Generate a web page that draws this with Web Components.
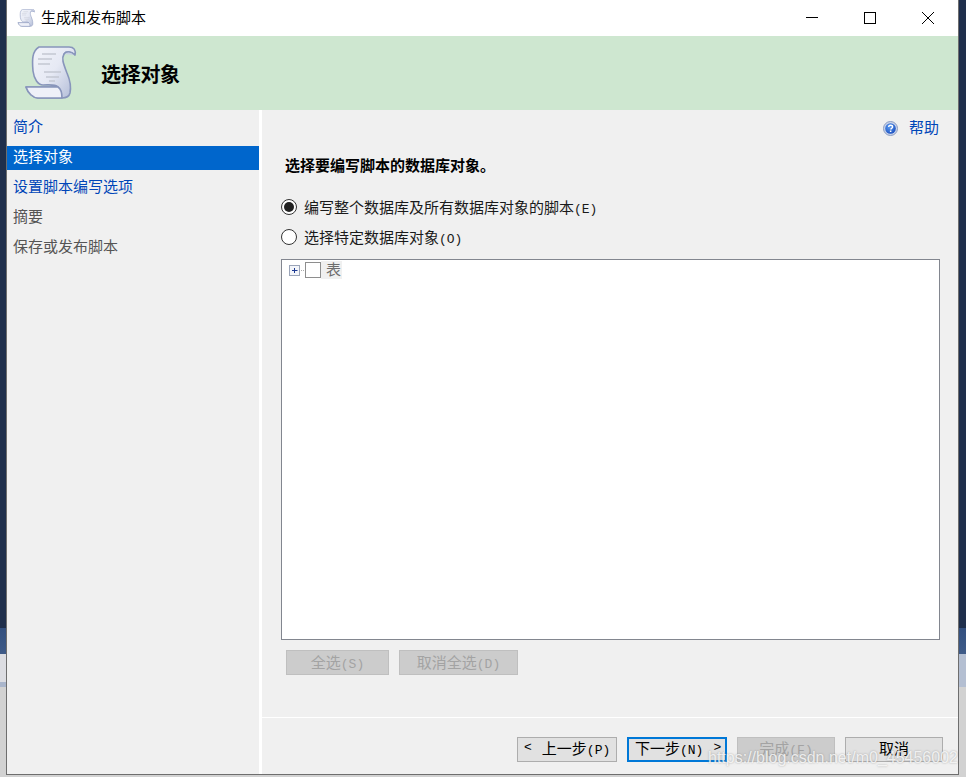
<!DOCTYPE html>
<html lang="zh">
<head>
<meta charset="utf-8">
<title>生成和发布脚本</title>
<style>
  html, body { margin: 0; height: 100%; overflow: hidden; }
  body {
    font-family: "Noto Sans CJK SC", "Liberation Sans", sans-serif;
    font-size: 15px;
  }
</style>
</head>
<body>
<template id="scroll-art">
  <svg viewBox="0 0 54 54" width="100%" height="100%">
    <defs>
      <linearGradient id="paper" x1="0" y1="0" x2="1" y2="0.7">
        <stop offset="0" stop-color="#f4f6fb"/>
        <stop offset="0.6" stop-color="#e6e9f4"/>
        <stop offset="1" stop-color="#bcc5dd"/>
      </linearGradient>
    </defs>
    <path d="M16 1 H46 C51 1 53 4 52 9 C48 5 43 5 41 8 C38 13 41 19 44 27 C47 34 48 42 47 47 C46 51 42 52 39 52 H15 C10 52 5 47 3 41 H35 C32 38 27 39 20 39 C15 39 11 33 10 25 C9 14 9 5 16 1 Z" fill="url(#paper)" stroke="#8895bb" stroke-width="1.6" stroke-linejoin="round"/>
    <path d="M3 41 H35 C38 43 39 48 39 52 H15 C10 52 5 47 3 41 Z" fill="#eef0f8" stroke="#8895bb" stroke-width="1.6" stroke-linejoin="round"/>
    <path d="M41 8 C43 5 48 5 52 9" fill="#c8d0e4" stroke="#8895bb" stroke-width="1.4"/>
    <path d="M19 8 H33 M15 13 H29 M15 18 H27 M21 26 H38 M23 31 H36 M26 35 H32" stroke="#c3c8d2" stroke-width="1.3" fill="none"/>
  </svg>
</template>

<script>
class ScrollIcon extends HTMLElement {
  connectedCallback() {
    const size = this.getAttribute("size") || "54";
    this.attachShadow({ mode: "open" });
    this.shadowRoot.innerHTML = `
      <style>
        :host { display: block; width: ${size}px; height: ${size}px; flex: none; }
      </style>`;
    this.shadowRoot.appendChild(document.getElementById("scroll-art").content.cloneNode(true));
  }
}

class KeyHint extends HTMLElement {
  constructor() {
    super();
    this.attachShadow({ mode: "open" });
    // no whitespace around the slot, this one sits inline in running text
    this.shadowRoot.innerHTML = `<style>
        :host { display: inline; font-family: "Liberation Mono", monospace; font-size: 13px; }
      </style><slot></slot>`;
  }
}

class DesktopStrip extends HTMLElement {
  constructor() {
    super();
    this.attachShadow({ mode: "open" });
    this.shadowRoot.innerHTML = `
      <style>
        :host { display: flex; flex-direction: column; flex: none; height: 777px; background: #d2d2d2; }
        .navy { height: 628px; background: #1f2f4c; }
        .blue { height: 26px; background: linear-gradient(#33507f, #3f5b88); }
        .pale { height: 28px; background: var(--pale, #dcdde2); }
        .band { height: 5px; background: var(--band, #aab6cc); }
      </style>
      <div class="navy"></div>
      <div class="blue"></div>
      <div class="pale"></div>
      <div class="band"></div>`;
  }
}

class TitleBar extends HTMLElement {
  constructor() {
    super();
    this.attachShadow({ mode: "open" });
    this.shadowRoot.innerHTML = `
      <style>
        :host { display: flex; align-items: center; height: 36px; background: #fff; color: #000; }
        .icon { margin: 0 6px 0 10px; }
        .text { flex: 1; line-height: 34px; height: 36px; }
        .ctl { width: 46px; margin-left: 12px; height: 36px; display: flex; align-items: center; justify-content: center; }
        .ctl svg { display: block; }
        .controls { display: flex; margin-right: 7px; }
      </style>
      <scroll-icon class="icon" size="18"></scroll-icon>
      <span class="text"><slot></slot></span>
      <div class="controls">
        <div class="ctl"><svg width="12" height="12"><path d="M0 5.500H12" stroke="#000"/></svg></div>
        <div class="ctl"><svg width="12" height="12"><rect x=".5" y=".5" width="11" height="11" fill="none" stroke="#000"/></svg></div>
        <div class="ctl"><svg width="12" height="12"><path d="M0 0L12 12M12 0L0 12" stroke="#000" stroke-width="1"/></svg></div>
      </div>`;
  }
}

class WizardHeader extends HTMLElement {
  constructor() {
    super();
    this.attachShadow({ mode: "open" });
    this.shadowRoot.innerHTML = `
      <style>
        :host { display: flex; align-items: center; height: 74px; background: #cee7d0; color: #000; padding-left: 16px; }
        .title { margin-left: 24px; font-size: 20px; font-weight: 700; letter-spacing: -.3px; }
      </style>
      <scroll-icon size="54"></scroll-icon>
      <span class="title"><slot></slot></span>`;
  }
}

class NavItem extends HTMLElement {
  constructor() {
    super();
    this.attachShadow({ mode: "open" });
    this.shadowRoot.innerHTML = `
      <style>
        :host { display: block; height: 24px; line-height: 20px; padding-left: 6px; margin-bottom: 6px; color: #0046b8; white-space: nowrap; }
        :host([state="active"]) { background: #0066cc; color: #fff; }
        :host([state="muted"]) { color: #555; }
      </style>
      <slot></slot>`;
  }
}

class NavList extends HTMLElement {
  constructor() {
    super();
    this.attachShadow({ mode: "open" });
    this.shadowRoot.innerHTML = `
      <style>
        :host { display: block; width: 252px; flex: none; box-sizing: border-box; padding-top: 6px; background: #f0f0f0; border-right: 0; }
      </style>
      <slot></slot>`;
  }
}

class RadioOption extends HTMLElement {
  constructor() {
    super();
    this.attachShadow({ mode: "open" });
    this.shadowRoot.innerHTML = `
      <style>
        :host { display: flex; align-items: center; height: 20px; color: #1a1a1a; white-space: nowrap; }
        .dot { width: 16px; height: 16px; box-sizing: border-box; border: 1px solid #333; border-radius: 50%; background: #fff; margin-right: 7px; display: flex; align-items: center; justify-content: center; flex: none; }
        :host([checked]) .dot::after { content: ""; width: 10px; height: 10px; border-radius: 50%; background: #222; }
        .text { line-height: 20px; height: 20px; }
      </style>
      <span class="dot"></span><span class="text"><slot></slot></span>`;
  }
}

class TreeBox extends HTMLElement {
  constructor() {
    super();
    this.attachShadow({ mode: "open" });
    this.shadowRoot.innerHTML = `
      <style>
        :host { display: block; box-sizing: border-box; width: 659px; height: 381px; background: #fff; border: 1px solid #82868f; padding: 1px 0 0 7px; }
        .row { display: flex; align-items: center; height: 18px; }
        .plus { display: block; }
        .check { width: 16px; height: 16px; box-sizing: border-box; border: 1px solid #8e8e8e; background: #fff; }
        .label { background: #f0f0f0; color: #6d6d6d; padding: 0 1px 0 5px; height: 18px; line-height: 16px; }
      </style>
      <div class="row">
        <svg class="plus" width="16" height="12" viewBox="0 0 16 12">
          <rect x=".5" y="1.5" width="10" height="10" fill="#f3f5fa" stroke="#9aa4b8"/>
          <path d="M3 6.5H8.500M5.500 4V9" stroke="#1d3a92"/>
          <path d="M12 6.500H16" stroke="#aaa" stroke-dasharray="1 1"/>
        </svg>
        <span class="check"></span><span class="label"><slot></slot></span>
      </div>`;
  }
}

class WizardButton extends HTMLElement {
  constructor() {
    super();
    this.attachShadow({ mode: "open" });
    this.shadowRoot.innerHTML = `
      <style>
        :host { display: flex; align-items: center; justify-content: center; box-sizing: border-box; height: 25px; background: #e1e1e1; border: 1px solid #adadad; color: #000; white-space: nowrap; flex: none; font-size: 15px; padding: 0 0 3px; }
        :host([slot="nav-button"]) { padding-bottom: 5px; }
        :host([disabled]) { background: #cccccc; border-color: #bfbfbf; color: #a3a3a3; }
        :host([focused]) { border: 2px solid #0078d7; padding-bottom: 4px; }
        :host([arrow]) { justify-content: flex-start; gap: 10px; padding-left: 6px; }
      </style>
      <slot></slot>`;
  }
}

class HelpLink extends HTMLElement {
  constructor() {
    super();
    this.attachShadow({ mode: "open" });
    this.shadowRoot.innerHTML = `
      <style>
        :host { display: flex; align-items: center; justify-content: flex-end; height: 20px; color: #0046b8; }
        svg { margin-right: 11px; display: block; }
        .text { line-height: 18px; height: 20px; }
      </style>
      <svg width="15" height="15" viewBox="0 0 15 15">
        <defs><radialGradient id="h" cx=".4" cy=".35" r=".7"><stop offset="0" stop-color="#5b9bf0"/><stop offset="1" stop-color="#1a4fc0"/></radialGradient></defs>
        <circle cx="7.500" cy="7.500" r="7" fill="#c9d4ea" stroke="#8b9cc2"/>
        <circle cx="7.500" cy="7.500" r="5.300" fill="url(#h)"/>
        <path d="M5.600 6C5.700 4.700 6.500 4.200 7.600 4.200C8.800 4.200 9.600 4.900 9.600 5.900C9.600 7.100 8 7.300 7.700 8.500" fill="none" stroke="#fff" stroke-width="1.400"/>
        <rect x="6.900" y="9.500" width="1.500" height="1.500" fill="#fff"/>
      </svg>
      <span class="text"><slot></slot></span>`;
  }
}

class WizardPage extends HTMLElement {
  constructor() {
    super();
    this.attachShadow({ mode: "open" });
    this.shadowRoot.innerHTML = `
      <style>
        :host { display: flex; flex-direction: column; flex: 1; min-width: 0; background: #f0f0f0; border-left: 3px solid #fff; }
        .top { padding: 8px 19px 0 19px; flex: 1; }
        .heading { margin: 18px 0 0 4px; font-weight: 700; color: #000; line-height: 18px; height: 20px; }
        .radios { display: flex; flex-direction: column; gap: 10px; margin-top: 21px; }
        .tree { margin-top: 12px; }
        .tree-actions { display: flex; gap: 10px; margin: 10px 0 0 5px; }
        .footer { border-top: 1px solid #fff; height: 57px; box-sizing: border-box; padding: 19px 16px 0 255px; display: flex; gap: 10px; }
      </style>
      <div class="top">
        <slot name="help"></slot>
        <div class="heading"><slot name="heading"></slot></div>
        <div class="radios"><slot name="radio"></slot></div>
        <div class="tree"><slot name="tree"></slot></div>
        <div class="tree-actions"><slot name="tree-action"></slot></div>
      </div>
      <div class="footer"><slot name="nav-button"></slot></div>`;
  }
}

class DialogWindow extends HTMLElement {
  constructor() {
    super();
    this.attachShadow({ mode: "open" });
    this.shadowRoot.innerHTML = `
      <style>
        :host { display: flex; flex-direction: column; width: 953px; height: 775px; box-sizing: border-box; flex: none; background: #f0f0f0; border: 1px solid #6e6e6e; border-top: 0; }
        .body { display: flex; flex: 1; min-height: 0; }
      </style>
      <slot name="bar"></slot>
      <div class="body"><slot></slot></div>`;
  }
}

class DesktopScreen extends HTMLElement {
  constructor() {
    super();
    this.attachShadow({ mode: "open" });
    this.shadowRoot.innerHTML = `
      <style>
        :host { display: block; position: relative; width: 966px; height: 777px; overflow: hidden; background: #d2d2d2; }
        .row { display: flex; }
        .left { width: 6px; }
        .right { width: 7px; --pale: #b4bfd2; --band: #b4bfd2; }
        .mark { position: absolute; left: 708px; top: 749px; font: 16px "Liberation Sans", sans-serif; color: rgba(255,255,255,.8); text-shadow: 0 0 2px rgba(110,110,110,.6); white-space: nowrap; }
      </style>
      <div class="row">
        <desktop-strip class="left"></desktop-strip>
        <slot></slot>
        <desktop-strip class="right"></desktop-strip>
      </div>
      <div class="mark">https://blog.csdn.net/m0_45456002</div>`;
  }
}

customElements.define("scroll-icon", ScrollIcon);
customElements.define("key-hint", KeyHint);
customElements.define("desktop-strip", DesktopStrip);
customElements.define("title-bar", TitleBar);
customElements.define("wizard-header", WizardHeader);
customElements.define("nav-item", NavItem);
customElements.define("nav-list", NavList);
customElements.define("radio-option", RadioOption);
customElements.define("tree-box", TreeBox);
customElements.define("wizard-button", WizardButton);
customElements.define("help-link", HelpLink);
customElements.define("wizard-page", WizardPage);
customElements.define("dialog-window", DialogWindow);
customElements.define("desktop-screen", DesktopScreen);
</script>

<desktop-screen>
  <dialog-window>
    <div slot="bar">
      <title-bar>生成和发布脚本</title-bar>
      <wizard-header>选择对象</wizard-header>
    </div>
    <nav-list>
      <nav-item>简介</nav-item>
      <nav-item state="active">选择对象</nav-item>
      <nav-item>设置脚本编写选项</nav-item>
      <nav-item state="muted">摘要</nav-item>
      <nav-item state="muted">保存或发布脚本</nav-item>
    </nav-list>
    <wizard-page>
      <help-link slot="help">帮助</help-link>
      <span slot="heading">选择要编写脚本的数据库对象。</span>
      <radio-option slot="radio" checked>编写整个数据库及所有数据库对象的脚本<key-hint>(E)</key-hint></radio-option>
      <radio-option slot="radio">选择特定数据库对象<key-hint>(O)</key-hint></radio-option>
      <tree-box slot="tree">表</tree-box>
      <wizard-button slot="tree-action" disabled style="width:103px"><span>全选<key-hint>(S)</key-hint></span></wizard-button>
      <wizard-button slot="tree-action" disabled style="width:119px"><span>取消全选<key-hint>(D)</key-hint></span></wizard-button>
      <wizard-button slot="nav-button" arrow style="width:100px"><key-hint>&lt;</key-hint><span>上一步<key-hint>(P)</key-hint></span></wizard-button>
      <wizard-button slot="nav-button" arrow focused style="width:100px"><span>下一步<key-hint>(N)</key-hint></span><key-hint>&gt;</key-hint></wizard-button>
      <wizard-button slot="nav-button" disabled style="width:98px"><span>完成<key-hint>(F)</key-hint></span></wizard-button>
      <wizard-button slot="nav-button" style="width:98px">取消</wizard-button>
    </wizard-page>
  </dialog-window>
</desktop-screen>
</body>
</html>
